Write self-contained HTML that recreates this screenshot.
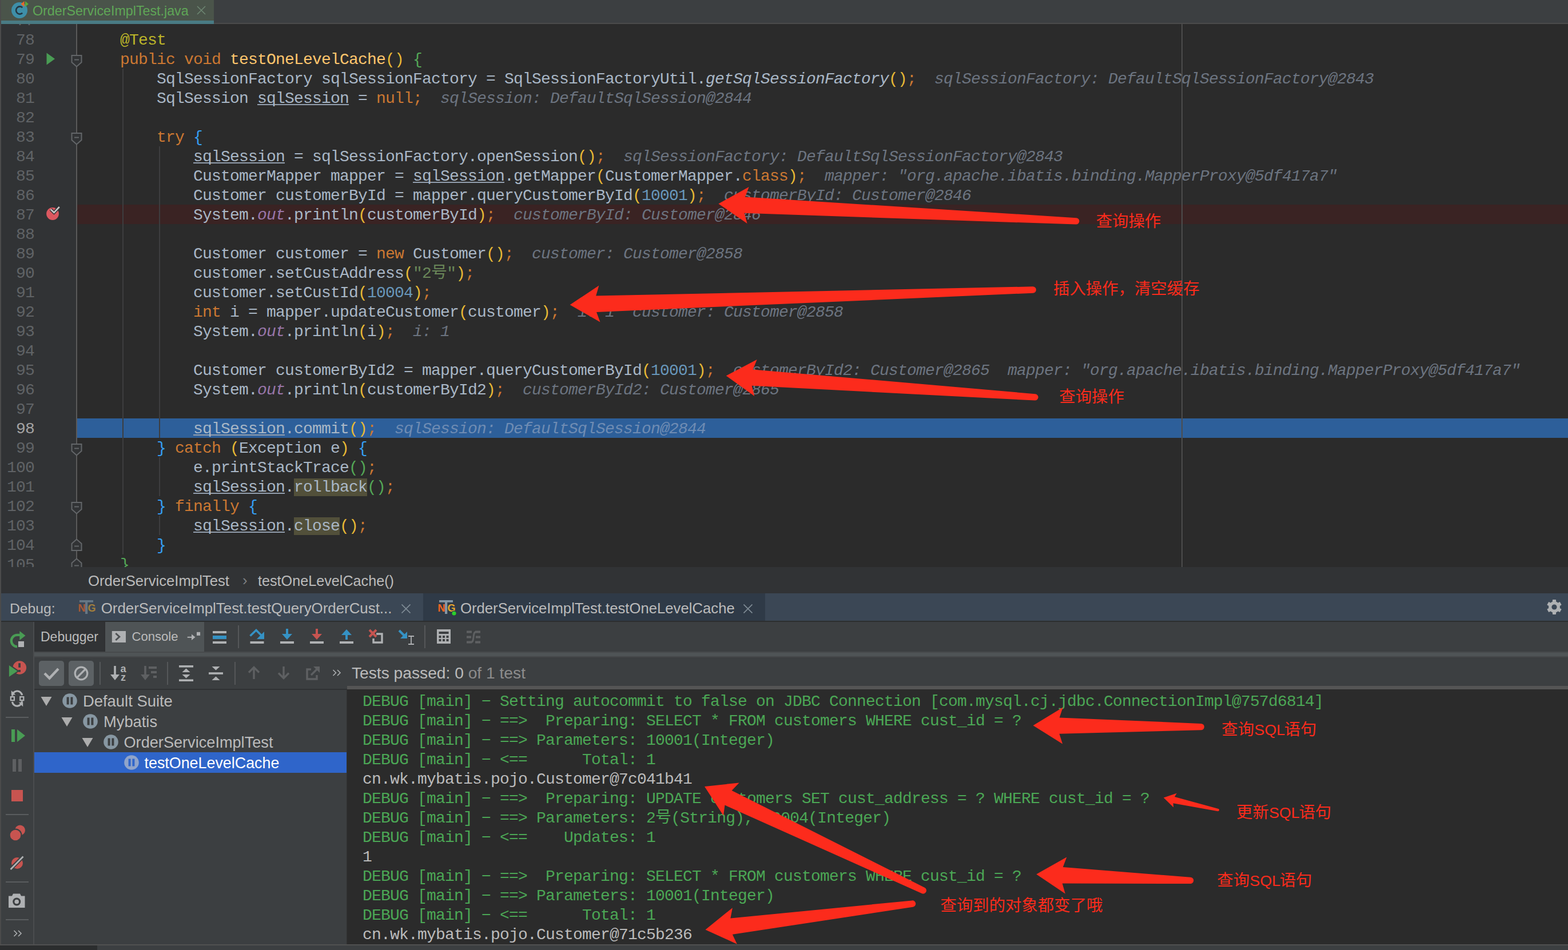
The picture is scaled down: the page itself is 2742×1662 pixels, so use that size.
<!DOCTYPE html><html><head><meta charset="utf-8"><title>IDE</title><style>
*{box-sizing:border-box}
html,body{margin:0;padding:0}
body{width:2742px;height:1662px;overflow:hidden;background:#2b2b2b;position:relative;font-family:"Liberation Sans",sans-serif;color:#bbbbbb}
.abs{position:absolute}
.mono{font-family:"Liberation Mono","Noto Sans CJK SC",monospace;font-size:28px;letter-spacing:-0.803px;white-space:pre;line-height:34px;height:34px;padding-top:1.5px}
.ln{position:absolute;left:0;width:60px;text-align:right;color:#606366}
.cl{position:absolute;left:146px;color:#a9b7c6}
.k{color:#cc7832}.a{color:#bbb529}.m{color:#ffc66d}.n{color:#6897bb}.s{color:#6a8759}
.f{color:#9876aa;font-style:italic}.i{font-style:italic}.h{color:#6c7480;font-style:italic}
.u{text-decoration:underline;text-decoration-color:#939fae;text-decoration-thickness:1.5px;text-underline-offset:2px;text-decoration-skip-ink:none}
.hb{color:#6f8cb3}.r1{color:#e8ba36}.r2{color:#54a857}.r3{color:#359ff4}
.hl{background:#52503a}
.g{color:#4ba755}.w{color:#bbbbbb}
.t{position:absolute;white-space:pre;line-height:1}
svg{display:block}
</style></head><body>
<div class="abs" style="left:0px;top:0px;width:2742px;height:42px;background:#3c3f41;"></div>
<div class="abs" style="left:0px;top:40px;width:2742px;height:2px;background:#4b4b4b;"></div>
<div class="abs" style="left:2px;top:0px;width:372px;height:42px;background:#4a544a;"></div>
<div class="abs" style="left:2px;top:36px;width:372px;height:6px;background:#497b84;"></div>
<svg class="abs" style="left:18px;top:0px" width="36" height="36" viewBox="0 0 36 36">
<circle cx="16" cy="18" r="14" fill="#3e8fa8"/>
<path d="M21.2 13.2A6.6 6.6 0 1 0 21.2 22.8" fill="none" stroke="#253641" stroke-width="2.6"/>
<path d="M18.5 7L24.5 2V12Z" fill="#e9672b"/><path d="M26 2L32 7L26 12Z" fill="#59a83b"/>
</svg>
<div class="t" style="left:57px;top:7.87px;font-size:23.26px;height:23.26px;line-height:23.26px;color:#5fa657;">OrderServiceImplTest.java</div>
<svg class="abs" style="left:344px;top:10px" width="16" height="16" viewBox="0 0 16 16"><path d="M1 1L15 15M15 1L1 15" stroke="#6d8672" stroke-width="1.6" fill="none"/></svg>
<div class="abs" style="left:2px;top:42px;width:131px;height:950px;background:#313335;"></div>
<div class="abs" style="left:133px;top:42px;width:2px;height:950px;background:#5a5a5a;"></div>
<div class="abs" style="left:135px;top:358px;width:2607px;height:34px;background:#3a2323;"></div>
<div class="abs" style="left:135px;top:732px;width:2607px;height:34px;background:#2d5f9a;"></div>
<div class="abs" style="left:214px;top:120px;width:2px;height:850px;background:#3d3d3f;"></div>
<div class="abs" style="left:278px;top:256px;width:2px;height:510px;background:#3d3d3f;"></div>
<div class="abs" style="left:278px;top:800px;width:2px;height:68px;background:#3d3d3f;"></div>
<div class="abs" style="left:278px;top:902px;width:2px;height:34px;background:#3d3d3f;"></div>
<div class="abs" style="left:2066px;top:42px;width:2px;height:950px;background:#4d4d4d;"></div>
<div class="abs" style="left:0;top:42px;width:2742px;height:950px;overflow:hidden"><div class="abs" style="left:0;top:-42px;width:2742px;height:1100px">
<div class="ln mono" style="top:18px;color:#606366">77</div>
<div class="ln mono" style="top:52px;color:#606366">78</div>
<div class="ln mono" style="top:86px;color:#606366">79</div>
<div class="ln mono" style="top:120px;color:#606366">80</div>
<div class="ln mono" style="top:154px;color:#606366">81</div>
<div class="ln mono" style="top:188px;color:#606366">82</div>
<div class="ln mono" style="top:222px;color:#606366">83</div>
<div class="ln mono" style="top:256px;color:#606366">84</div>
<div class="ln mono" style="top:290px;color:#606366">85</div>
<div class="ln mono" style="top:324px;color:#606366">86</div>
<div class="ln mono" style="top:358px;color:#606366">87</div>
<div class="ln mono" style="top:392px;color:#606366">88</div>
<div class="ln mono" style="top:426px;color:#606366">89</div>
<div class="ln mono" style="top:460px;color:#606366">90</div>
<div class="ln mono" style="top:494px;color:#606366">91</div>
<div class="ln mono" style="top:528px;color:#606366">92</div>
<div class="ln mono" style="top:562px;color:#606366">93</div>
<div class="ln mono" style="top:596px;color:#606366">94</div>
<div class="ln mono" style="top:630px;color:#606366">95</div>
<div class="ln mono" style="top:664px;color:#606366">96</div>
<div class="ln mono" style="top:698px;color:#606366">97</div>
<div class="ln mono" style="top:732px;color:#a4a3a3">98</div>
<div class="ln mono" style="top:766px;color:#606366">99</div>
<div class="ln mono" style="top:800px;color:#606366">100</div>
<div class="ln mono" style="top:834px;color:#606366">101</div>
<div class="ln mono" style="top:868px;color:#606366">102</div>
<div class="ln mono" style="top:902px;color:#606366">103</div>
<div class="ln mono" style="top:936px;color:#606366">104</div>
<div class="ln mono" style="top:970px;color:#606366">105</div>
<div class="cl mono" style="top:52px">    <span class="a">@Test</span></div>
<div class="cl mono" style="top:86px">    <span class="k">public void </span><span class="m">testOneLevelCache</span><span class="r1">()</span> <span class="r2">{</span></div>
<div class="cl mono" style="top:120px">        SqlSessionFactory sqlSessionFactory = SqlSessionFactoryUtil.<span class="i">getSqlSessionFactory</span><span class="r1">()</span><span class="k">;</span><span class="h">  sqlSessionFactory: DefaultSqlSessionFactory@2843</span></div>
<div class="cl mono" style="top:154px">        SqlSession <span class="u">sqlSession</span> = <span class="k">null;</span><span class="h">  sqlSession: DefaultSqlSession@2844</span></div>
<div class="cl mono" style="top:222px">        <span class="k">try </span><span class="r3">{</span></div>
<div class="cl mono" style="top:256px">            <span class="u">sqlSession</span> = sqlSessionFactory.openSession<span class="r1">()</span><span class="k">;</span><span class="h">  sqlSessionFactory: DefaultSqlSessionFactory@2843</span></div>
<div class="cl mono" style="top:290px">            CustomerMapper mapper = <span class="u">sqlSession</span>.getMapper<span class="r1">(</span>CustomerMapper.<span class="k">class</span><span class="r1">)</span><span class="k">;</span><span class="h">  mapper: &quot;org.apache.ibatis.binding.MapperProxy@5df417a7&quot;</span></div>
<div class="cl mono" style="top:324px">            Customer customerById = mapper.queryCustomerById<span class="r1">(</span><span class="n">10001</span><span class="r1">)</span><span class="k">;</span><span class="h">  customerById: Customer@2846</span></div>
<div class="cl mono" style="top:358px">            System.<span class="f">out</span>.println<span class="r1">(</span>customerById<span class="r1">)</span><span class="k">;</span><span class="h">  customerById: Customer@2846</span></div>
<div class="cl mono" style="top:426px">            Customer customer = <span class="k">new </span>Customer<span class="r1">()</span><span class="k">;</span><span class="h">  customer: Customer@2858</span></div>
<div class="cl mono" style="top:460px">            customer.setCustAddress<span class="r1">(</span><span class="s">&quot;2</span><span class="s">号</span><span class="s">&quot;</span><span class="r1">)</span><span class="k">;</span></div>
<div class="cl mono" style="top:494px">            customer.setCustId<span class="r1">(</span><span class="n">10004</span><span class="r1">)</span><span class="k">;</span></div>
<div class="cl mono" style="top:528px">            <span class="k">int </span>i = mapper.updateCustomer<span class="r1">(</span>customer<span class="r1">)</span><span class="k">;</span><span class="h">  i: 1  customer: Customer@2858</span></div>
<div class="cl mono" style="top:562px">            System.<span class="f">out</span>.println<span class="r1">(</span>i<span class="r1">)</span><span class="k">;</span><span class="h">  i: 1</span></div>
<div class="cl mono" style="top:630px">            Customer customerById2 = mapper.queryCustomerById<span class="r1">(</span><span class="n">10001</span><span class="r1">)</span><span class="k">;</span><span class="h">  customerById2: Customer@2865  mapper: &quot;org.apache.ibatis.binding.MapperProxy@5df417a7&quot;</span></div>
<div class="cl mono" style="top:664px">            System.<span class="f">out</span>.println<span class="r1">(</span>customerById2<span class="r1">)</span><span class="k">;</span><span class="h">  customerById2: Customer@2865</span></div>
<div class="cl mono" style="top:732px">            <span class="u">sqlSession</span>.commit<span class="r1">()</span><span class="k">;</span><span class="h hb">  sqlSession: DefaultSqlSession@2844</span></div>
<div class="cl mono" style="top:766px">        <span class="r3">}</span> <span class="k">catch </span><span class="r1">(</span>Exception e<span class="r1">)</span> <span class="r3">{</span></div>
<div class="cl mono" style="top:800px">            e.printStackTrace<span class="r2">()</span><span class="k">;</span></div>
<div class="cl mono" style="top:834px">            <span class="u">sqlSession</span>.<span class="hl">rollback</span><span class="r2">()</span><span class="k">;</span></div>
<div class="cl mono" style="top:868px">        <span class="r3">}</span> <span class="k">finally </span><span class="r3">{</span></div>
<div class="cl mono" style="top:902px">            <span class="u">sqlSession</span>.<span class="hl">close</span><span class="r1">()</span><span class="k">;</span></div>
<div class="cl mono" style="top:936px">        <span class="r3">}</span></div>
<div class="cl mono" style="top:970px">    <span class="r2">}</span></div>
</div></div>
<svg class="abs" style="left:80px;top:92px" width="18" height="22" viewBox="0 0 18 22"><path d="M1.5 0.5L16 11L1.5 21.5Z" fill="#499c54"/></svg>
<svg class="abs" style="left:78px;top:356px" width="30" height="30" viewBox="0 0 30 30">
<circle cx="14" cy="18" r="10.900" fill="#db5860"/>
<path d="M10.700 10.200L16.400 15.800L25.800 6" fill="none" stroke="#313335" stroke-width="5.500"/>
<path d="M10.700 10.200L16.400 15.800L25.800 6" fill="none" stroke="#c8c8c8" stroke-width="2.600"/></svg>
<svg class="abs" style="left:124px;top:96px" width="20" height="22" viewBox="0 0 20 22"><path d="M1.5 1H18.5V13L10 20.5L1.5 13Z" fill="#313335" stroke="#636669" stroke-width="2"/><path d="M6 8.5H14" stroke="#636669" stroke-width="2"/></svg>
<svg class="abs" style="left:124px;top:232px" width="20" height="22" viewBox="0 0 20 22"><path d="M1.5 1H18.5V13L10 20.5L1.5 13Z" fill="#313335" stroke="#636669" stroke-width="2"/><path d="M6 8.5H14" stroke="#636669" stroke-width="2"/></svg>
<svg class="abs" style="left:124px;top:776px" width="20" height="22" viewBox="0 0 20 22"><path d="M1.5 1H18.5V13L10 20.5L1.5 13Z" fill="#313335" stroke="#636669" stroke-width="2"/><path d="M6 8.5H14" stroke="#636669" stroke-width="2"/></svg>
<svg class="abs" style="left:124px;top:878px" width="20" height="22" viewBox="0 0 20 22"><path d="M1.5 1H18.5V13L10 20.5L1.5 13Z" fill="#313335" stroke="#636669" stroke-width="2"/><path d="M6 8.5H14" stroke="#636669" stroke-width="2"/></svg>
<div class="abs" style="left:0;top:42px;width:2742px;height:950px;overflow:hidden"><div class="abs" style="left:0;top:-42px;width:2742px;height:1100px">
<svg class="abs" style="left:124px;top:941.5px" width="20" height="22" viewBox="0 0 20 22"><path d="M1.5 21H18.5V9L10 1.5L1.5 9Z" fill="#313335" stroke="#636669" stroke-width="2"/><path d="M6 13.5H14" stroke="#636669" stroke-width="2"/></svg>
<svg class="abs" style="left:124px;top:975.5px" width="20" height="22" viewBox="0 0 20 22"><path d="M1.5 21H18.5V9L10 1.5L1.5 9Z" fill="#313335" stroke="#636669" stroke-width="2"/><path d="M6 13.5H14" stroke="#636669" stroke-width="2"/></svg>
</div></div>
<div class="abs" style="left:0px;top:992px;width:2742px;height:46px;background:#313335;"></div>
<div class="t" style="left:154px;top:1004.15px;font-size:25.7px;height:25.7px;line-height:25.7px;color:#bbbbbb;">OrderServiceImplTest</div>
<div class="t" style="left:424px;top:1002.00px;font-size:26px;height:26px;line-height:26px;color:#7d8082;">›</div>
<div class="t" style="left:451px;top:1004.40px;font-size:25.2px;height:25.2px;line-height:25.2px;color:#bbbbbb;">testOneLevelCache()</div>
<div class="abs" style="left:0px;top:1038px;width:2742px;height:48px;background:#3b4755;"></div>
<div class="abs" style="left:740px;top:1038px;width:598px;height:48px;background:#2f3a47;"></div>
<div class="abs" style="left:0px;top:1086px;width:2742px;height:2px;background:#2c2e2f;"></div>
<div class="t" style="left:17px;top:1052.65px;font-size:24.7px;height:24.7px;line-height:24.7px;color:#bbbbbb;">Debug:</div>
<svg class="abs" style="left:136px;top:1047px" width="36" height="32" viewBox="0 0 36 32">
<g opacity="0.6"><path d="M3 3H27V6.8H17.200V27H13V6.8H3Z" fill="#8497a6"/>
<text x="0.500" y="23" font-family="Liberation Sans" font-weight="bold" font-size="18" fill="#f26522">N</text>
<text x="17.500" y="23" font-family="Liberation Sans" font-weight="bold" font-size="18" fill="#e6a52c">G</text></g></svg>
<div class="t" style="left:176.7px;top:1052.07px;font-size:25.87px;height:25.87px;line-height:25.87px;color:#bbbbbb;">OrderServiceImplTest.testQueryOrderCust...</div>
<svg class="abs" style="left:702px;top:1057px" width="16" height="16" viewBox="0 0 16 16"><path d="M0.5 0.5L15.5 15.5M15.5 0.5L0.5 15.5" stroke="#7f8b95" stroke-width="1.7" fill="none"/></svg>
<svg class="abs" style="left:765px;top:1047px" width="36" height="32" viewBox="0 0 36 32">
<g opacity="1"><path d="M3 3H27V6.8H17.200V27H13V6.8H3Z" fill="#8497a6"/>
<text x="0.500" y="23" font-family="Liberation Sans" font-weight="bold" font-size="18" fill="#f26522">N</text>
<text x="17.500" y="23" font-family="Liberation Sans" font-weight="bold" font-size="18" fill="#e6a52c">G</text></g><circle cx="29" cy="26" r="4.2" fill="#2bd02b" stroke="#2f3a47" stroke-width="1.2"/></svg>
<div class="t" style="left:805px;top:1052.15px;font-size:25.7px;height:25.7px;line-height:25.7px;color:#bbbbbb;">OrderServiceImplTest.testOneLevelCache</div>
<svg class="abs" style="left:1300px;top:1057px" width="16" height="16" viewBox="0 0 16 16"><path d="M0.5 0.5L15.5 15.5M15.5 0.5L0.5 15.5" stroke="#7f8b95" stroke-width="1.7" fill="none"/></svg>
<svg class="abs" style="left:2704px;top:1048px" width="28" height="28" viewBox="-14 -14 28 28">
<g fill="#afb1b3"><circle r="10"/><rect x="-3.100" y="-12.900" width="6.200" height="7" rx="0.800" transform="rotate(0)"/><rect x="-3.100" y="-12.900" width="6.200" height="7" rx="0.800" transform="rotate(60)"/><rect x="-3.100" y="-12.900" width="6.200" height="7" rx="0.800" transform="rotate(120)"/><rect x="-3.100" y="-12.900" width="6.200" height="7" rx="0.800" transform="rotate(180)"/><rect x="-3.100" y="-12.900" width="6.200" height="7" rx="0.800" transform="rotate(240)"/><rect x="-3.100" y="-12.900" width="6.200" height="7" rx="0.800" transform="rotate(300)"/></g><circle r="4.600" fill="#3b4755"/></svg>
<div class="abs" style="left:0px;top:1088px;width:2742px;height:52px;background:#3c3f41;"></div>
<div class="abs" style="left:60px;top:1088px;width:122px;height:52px;background:#313335;"></div>
<div class="abs" style="left:182px;top:1088px;width:2px;height:54px;background:#2f3133;"></div>
<div class="abs" style="left:184px;top:1088px;width:173px;height:60px;background:#4f5456;"></div>
<div class="abs" style="left:60px;top:1140px;width:2682px;height:2px;background:#474a4c;"></div>
<div class="abs" style="left:60px;top:1142px;width:2682px;height:6px;background:#4f5456;"></div>
<div class="abs" style="left:60px;top:1148px;width:2682px;height:2px;background:#45484a;"></div>
<div class="t" style="left:71px;top:1103.00px;font-size:23px;height:23px;line-height:23px;color:#bbbbbb;">Debugger</div>
<svg class="abs" style="left:195px;top:1103px" width="26" height="22" viewBox="0 0 26 22"><rect x="0.800" y="1" width="24.200" height="20" fill="#afb1b3"/><path d="M7.300 5L13.800 11L7.300 17" fill="none" stroke="#4e5254" stroke-width="3"/></svg>
<div class="t" style="left:230.5px;top:1103.45px;font-size:22.1px;height:22.1px;line-height:22.1px;color:#bbbbbb;">Console</div>
<svg class="abs" style="left:326px;top:1102px" width="26" height="22" viewBox="0 0 26 22"><path d="M1.700 12.800H10" fill="none" stroke="#afb1b3" stroke-width="2"/><path d="M9 7.500L15.500 12.800L9 18.100Z" fill="#afb1b3"/><rect x="18" y="3.800" width="6.100" height="6.100" fill="#afb1b3"/></svg>
<svg class="abs" style="left:372px;top:1102px" width="26" height="26" viewBox="0 0 26 26"><rect x="0" y="2" width="24" height="4" fill="#afb1b3"/><rect x="0" y="10" width="24" height="6" fill="#3592c4"/><rect x="0" y="20" width="24" height="4" fill="#afb1b3"/></svg>
<div class="abs" style="left:416px;top:1094px;width:2px;height:40px;background:#555759;"></div>
<svg class="abs" style="left:436px;top:1100px" width="28" height="28" viewBox="0 0 28 28"><rect x="1.5" y="22" width="24" height="4" fill="#afb1b3"/><path d="M1.5 12.5L12 2.5L21 11.5" fill="none" stroke="#3592c4" stroke-width="3.6"/><path d="M26 5V18H13Z" fill="#3592c4"/></svg>
<svg class="abs" style="left:488px;top:1098px" width="28" height="30" viewBox="0 0 28 30"><rect x="2" y="24" width="24" height="4" fill="#afb1b3"/><path d="M14 2V13" stroke="#3592c4" stroke-width="4" fill="none"/><path d="M5 11H23L14 21Z" fill="#3592c4"/></svg>
<svg class="abs" style="left:540px;top:1098px" width="28" height="30" viewBox="0 0 28 30"><rect x="2" y="24" width="24" height="4" fill="#afb1b3"/><path d="M14 2V13" stroke="#c75450" stroke-width="4" fill="none"/><path d="M5 11H23L14 21Z" fill="#c75450"/></svg>
<svg class="abs" style="left:592px;top:1098px" width="28" height="30" viewBox="0 0 28 30"><rect x="2" y="24" width="24" height="4" fill="#afb1b3"/><path d="M14 21V11" stroke="#3592c4" stroke-width="4" fill="none"/><path d="M5 13H23L14 3Z" fill="#3592c4"/></svg>
<svg class="abs" style="left:644px;top:1100px" width="28" height="28" viewBox="0 0 28 28"><path d="M2 2L14 14M14 2L2 14" stroke="#c75450" stroke-width="4" fill="none"/><path d="M14 9H24V24H9V17" fill="none" stroke="#afb1b3" stroke-width="3.4"/></svg>
<svg class="abs" style="left:696px;top:1100px" width="30" height="30" viewBox="0 0 30 30"><path d="M2 3L13 14" stroke="#3592c4" stroke-width="4" fill="none"/><path d="M16 5V17H4Z" fill="#3592c4"/><path d="M18 13H28M18 27H28M23 13V27" stroke="#afb1b3" stroke-width="1.8" fill="none"/></svg>
<div class="abs" style="left:742px;top:1094px;width:2px;height:40px;background:#555759;"></div>
<svg class="abs" style="left:764px;top:1101px" width="26" height="26" viewBox="0 0 26 26"><rect x="0" y="0" width="24" height="25" fill="#afb1b3"/><rect x="3.5" y="4" width="17" height="4" fill="#3c3f41"/><rect x="3.5" y="11" width="4" height="4" fill="#3c3f41"/><rect x="3.5" y="17" width="4" height="4" fill="#3c3f41"/><rect x="10.0" y="11" width="4" height="4" fill="#3c3f41"/><rect x="10.0" y="17" width="4" height="4" fill="#3c3f41"/><rect x="16.5" y="11" width="4" height="4" fill="#3c3f41"/><rect x="16.5" y="17" width="4" height="4" fill="#3c3f41"/></svg>
<svg class="abs" style="left:816px;top:1103px" width="26" height="24" viewBox="0 0 26 24"><g fill="none" stroke="#5e6062" stroke-width="4"><path d="M0 2.5H9M15 2.5H24M0 11.500H8M16 11.500H24M0 20.500H9M15 20.500H24"/><path d="M8 20.500C14 20.500 10 2.500 16 2.500" stroke-width="3"/></g></svg>
<div class="abs" style="left:0px;top:1088px;width:60px;height:564px;background:#3c3f41;"></div>
<div class="abs" style="left:58px;top:1088px;width:2px;height:564px;background:#4a4c4e;"></div>
<svg class="abs" style="left:16px;top:1102px" width="32" height="32" viewBox="0 0 32 32"><path d="M14 29.300A10.200 10.200 0 0 1 14 8.900H19" fill="none" stroke="#499c54" stroke-width="4.300"/><path d="M18.300 1.900L28.500 10L18.300 18Z" fill="#499c54"/><rect x="15.900" y="19.900" width="10.100" height="10.100" fill="#afb1b3"/></svg>
<svg class="abs" style="left:14px;top:1154px" width="34" height="32" viewBox="0 0 34 32"><circle cx="20.300" cy="14" r="11.800" fill="#c75450"/><path d="M1.900 10L16.500 20.100L1.900 30.100Z" fill="#499c54" stroke="#3c3f41" stroke-width="4" stroke-linejoin="miter"/><path d="M1.900 10L16.500 20.100L1.900 30.100Z" fill="#499c54"/><rect x="18.200" y="6.200" width="3.800" height="7.600" fill="#3c3f41"/><rect x="18.200" y="18" width="3.800" height="3.700" fill="#3c3f41"/></svg>
<svg class="abs" style="left:15px;top:1205px" width="32" height="34" viewBox="0 0 32 34"><g fill="none" stroke="#afb1b3" stroke-width="3.200"><path d="M6.500 12.500A8.600 8.600 0 0 1 23.600 11.300"/><path d="M23.500 21.600A8.600 8.600 0 0 1 6.400 22.800"/></g><path d="M4.800 2.900V10.400H12.300Z" fill="#afb1b3"/><path d="M25.200 31.200V23.700H17.700Z" fill="#afb1b3"/><rect x="3.800" y="14.100" width="6.100" height="6.100" fill="none" stroke="#afb1b3" stroke-width="2.200"/><rect x="20.200" y="14.100" width="6.100" height="6.100" fill="none" stroke="#afb1b3" stroke-width="2.200"/></svg>
<div class="abs" style="left:10px;top:1254px;width:40px;height:2px;background:#5a5d5f;"></div>
<svg class="abs" style="left:20px;top:1275px" width="26" height="24" viewBox="0 0 26 24"><rect x="0" y="1" width="6" height="22" fill="#499c54"/><path d="M10 1L24 12L10 23Z" fill="#499c54"/></svg>
<svg class="abs" style="left:22px;top:1328px" width="18" height="22" viewBox="0 0 18 22"><rect x="0" y="0" width="6" height="22" fill="#5e6062"/><rect x="10" y="0" width="6" height="22" fill="#5e6062"/></svg>
<div class="abs" style="left:20px;top:1382px;width:20px;height:20px;background:#c75450;"></div>
<div class="abs" style="left:10px;top:1424px;width:40px;height:2px;background:#5a5d5f;"></div>
<svg class="abs" style="left:17px;top:1443px" width="30" height="28" viewBox="0 0 30 28"><circle cx="18" cy="9.5" r="9" fill="#c75450"/><circle cx="10" cy="18" r="11.5" fill="#3c3f41"/><circle cx="10" cy="18" r="9.3" fill="#c75450"/></svg>
<svg class="abs" style="left:16px;top:1497px" width="28" height="26" viewBox="0 0 28 26"><circle cx="14" cy="13" r="10" fill="#c75450"/><path d="M2 24L25 1" stroke="#3c3f41" stroke-width="6.5"/><path d="M2.5 24L24.5 1.5" stroke="#afb1b3" stroke-width="2.8"/></svg>
<div class="abs" style="left:10px;top:1542px;width:40px;height:2px;background:#5a5d5f;"></div>
<svg class="abs" style="left:15px;top:1563px" width="30" height="26" viewBox="0 0 30 26"><path d="M0 4.500H6L8 0.500H20L22 4.500H28.500V25H0Z" fill="#afb1b3"/><circle cx="14.2" cy="14.500" r="7" fill="#3c3f41"/><circle cx="14.2" cy="14.500" r="3.800" fill="#afb1b3"/></svg>
<div class="abs" style="left:10px;top:1608px;width:40px;height:2px;background:#5a5d5f;"></div>
<svg class="abs" style="left:23px;top:1627px" width="16" height="12" viewBox="0 0 16 12"><path d="M1.500 1L6.500 6L1.500 11M9 1L14 6L9 11" fill="none" stroke="#afb1b3" stroke-width="1.6"/></svg>
<div class="abs" style="left:60px;top:1150px;width:2682px;height:50px;background:#3c3f41;"></div>
<div class="abs" style="left:68px;top:1156px;width:44px;height:44px;background:#5c6164;border-radius:5px"></div>
<div class="abs" style="left:120px;top:1156px;width:44px;height:44px;background:#5c6164;border-radius:5px"></div>
<svg class="abs" style="left:76px;top:1165px" width="28" height="26" viewBox="0 0 28 26"><path d="M2 13L10.500 21.5L26 5" fill="none" stroke="#afb1b3" stroke-width="4.4"/></svg>
<svg class="abs" style="left:129px;top:1165px" width="28" height="28" viewBox="0 0 28 28"><circle cx="13" cy="13" r="10.8" fill="none" stroke="#afb1b3" stroke-width="3.2"/><path d="M5.5 20.5L20.5 5.500" stroke="#afb1b3" stroke-width="3.2"/></svg>
<div class="abs" style="left:174px;top:1158px;width:2px;height:40px;background:#555759;"></div>
<svg class="abs" style="left:193px;top:1164px" width="30" height="28" viewBox="0 0 30 28"><path d="M8 1V20" stroke="#afb1b3" stroke-width="3.600"/><path d="M0 16H16L8 26Z" fill="#afb1b3"/><text x="17.5" y="12" font-family="Liberation Sans" font-weight="bold" font-size="18" fill="#afb1b3">a</text><text x="18" y="27" font-family="Liberation Sans" font-weight="bold" font-size="18" fill="#afb1b3">z</text></svg>
<svg class="abs" style="left:246px;top:1164px" width="30" height="28" viewBox="0 0 30 28"><path d="M8 1V20" stroke="#5e6062" stroke-width="3.600"/><path d="M0 16H16L8 26Z" fill="#5e6062"/><rect x="14" y="2" width="14" height="4" fill="#5e6062"/><rect x="18" y="10" width="10" height="4" fill="#5e6062"/><rect x="22" y="18" width="6" height="4" fill="#5e6062"/></svg>
<div class="abs" style="left:292px;top:1158px;width:2px;height:40px;background:#555759;"></div>
<svg class="abs" style="left:313px;top:1163px" width="26" height="30" viewBox="0 0 26 30"><rect x="0" y="1" width="25" height="3.600" fill="#afb1b3"/><rect x="0" y="25.400" width="25" height="3.600" fill="#afb1b3"/><path d="M5.500 13L12.500 6.500L19.500 13Z" fill="#afb1b3"/><path d="M5.500 17L12.500 23.500L19.500 17Z" fill="#afb1b3"/></svg>
<svg class="abs" style="left:365px;top:1163px" width="26" height="30" viewBox="0 0 26 30"><rect x="0" y="13.200" width="25" height="3.600" fill="#afb1b3"/><path d="M5.500 3L12.500 9.500L19.500 3Z" fill="#afb1b3"/><path d="M5.500 27L12.500 20.500L19.500 27Z" fill="#afb1b3"/></svg>
<div class="abs" style="left:410px;top:1158px;width:2px;height:40px;background:#555759;"></div>
<svg class="abs" style="left:432px;top:1164px" width="24" height="26" viewBox="0 0 24 26"><path d="M12 24V4M3 12.500L12 3.500L21 12.500" fill="none" stroke="#5e6062" stroke-width="3.400"/></svg>
<svg class="abs" style="left:484px;top:1164px" width="24" height="26" viewBox="0 0 24 26"><path d="M12 2V22M3 13.500L12 22.500L21 13.500" fill="none" stroke="#5e6062" stroke-width="3.400"/></svg>
<svg class="abs" style="left:535px;top:1164px" width="26" height="26" viewBox="0 0 26 26"><path d="M9 7H2V24H19V17" fill="none" stroke="#5e6062" stroke-width="3.400"/><path d="M9 17L22 4" stroke="#5e6062" stroke-width="3.400"/><path d="M13 2H24V13Z" fill="#5e6062"/></svg>
<svg class="abs" style="left:581px;top:1171px" width="16" height="12" viewBox="0 0 16 12"><path d="M1.500 1L6.500 6L1.500 11M9 1L14 6L9 11" fill="none" stroke="#afb1b3" stroke-width="1.600"/></svg>
<div class="t" style="left:615px;top:1163.300px;font-size:28.190px;height:28.190px;line-height:28.190px;color:#bbbbbb">Tests passed: 0<span style="color:#8c8c8c"> of 1 test</span></div>
<div class="abs" style="left:60px;top:1200px;width:547px;height:452px;background:#3c3f41;"></div>
<div class="abs" style="left:60px;top:1205px;width:547px;height:2px;background:#2f3133;"></div>
<div class="abs" style="left:607px;top:1200px;width:2135px;height:6px;background:#555555;"></div>
<div class="abs" style="left:60px;top:1316px;width:546px;height:36px;background:#2f65ca;"></div>
<svg class="abs" style="left:71px;top:1218px" width="20" height="18" viewBox="0 0 20 18"><path d="M0.500 1H19.500L10 17Z" fill="#adadad"/></svg>
<svg class="abs" style="left:109px;top:1213px" width="26" height="26" viewBox="0 0 26 26"><circle cx="13" cy="13" r="12.800" fill="#8797a2"/><rect x="7.600" y="6.500" width="4" height="13" fill="#3c3f41"/><rect x="14.400" y="6.500" width="4" height="13" fill="#3c3f41"/></svg>
<div class="t" style="left:145px;top:1213.30px;font-size:27.4px;height:27.4px;line-height:27.4px;color:#bbbbbb;">Default Suite</div>
<svg class="abs" style="left:107px;top:1254px" width="20" height="18" viewBox="0 0 20 18"><path d="M0.500 1H19.500L10 17Z" fill="#adadad"/></svg>
<svg class="abs" style="left:145px;top:1249px" width="26" height="26" viewBox="0 0 26 26"><circle cx="13" cy="13" r="12.800" fill="#8797a2"/><rect x="7.600" y="6.500" width="4" height="13" fill="#3c3f41"/><rect x="14.400" y="6.500" width="4" height="13" fill="#3c3f41"/></svg>
<div class="t" style="left:181px;top:1249.35px;font-size:27.3px;height:27.3px;line-height:27.3px;color:#bbbbbb;">Mybatis</div>
<svg class="abs" style="left:143px;top:1290px" width="20" height="18" viewBox="0 0 20 18"><path d="M0.500 1H19.500L10 17Z" fill="#adadad"/></svg>
<svg class="abs" style="left:181px;top:1285px" width="26" height="26" viewBox="0 0 26 26"><circle cx="13" cy="13" r="12.800" fill="#8797a2"/><rect x="7.600" y="6.500" width="4" height="13" fill="#3c3f41"/><rect x="14.400" y="6.500" width="4" height="13" fill="#3c3f41"/></svg>
<div class="t" style="left:216.5px;top:1285.42px;font-size:27.15px;height:27.15px;line-height:27.15px;color:#bbbbbb;">OrderServiceImplTest</div>
<svg class="abs" style="left:217px;top:1321px" width="26" height="26" viewBox="0 0 26 26"><circle cx="13" cy="13" r="12.800" fill="#90a4ca"/><rect x="7.600" y="6.500" width="4" height="13" fill="#2f65ca"/><rect x="14.400" y="6.500" width="4" height="13" fill="#2f65ca"/></svg>
<div class="t" style="left:252.5px;top:1321.57px;font-size:26.87px;height:26.87px;line-height:26.87px;color:#ffffff;">testOneLevelCache</div>
<div class="abs" style="left:606px;top:1206px;width:1px;height:446px;background:#323232;"></div>
<div class="abs" style="left:607px;top:1206px;width:2135px;height:446px;background:#2b2b2b;"></div>
<div class="abs mono g" style="left:634px;top:1209px">DEBUG [main] − Setting autocommit to false on JDBC Connection [com.mysql.cj.jdbc.ConnectionImpl@757d6814]</div>
<div class="abs mono g" style="left:634px;top:1243px">DEBUG [main] − ==&gt;  Preparing: SELECT * FROM customers WHERE cust_id = ? </div>
<div class="abs mono g" style="left:634px;top:1277px">DEBUG [main] − ==&gt; Parameters: 10001(Integer)</div>
<div class="abs mono g" style="left:634px;top:1311px">DEBUG [main] − &lt;==      Total: 1</div>
<div class="abs mono w" style="left:634px;top:1345px">cn.wk.mybatis.pojo.Customer@7c041b41</div>
<div class="abs mono g" style="left:634px;top:1379px">DEBUG [main] − ==&gt;  Preparing: UPDATE customers SET cust_address = ? WHERE cust_id = ? </div>
<div class="abs mono g" style="left:634px;top:1413px">DEBUG [main] − ==&gt; Parameters: 2号(String), 10004(Integer)</div>
<div class="abs mono g" style="left:634px;top:1447px">DEBUG [main] − &lt;==    Updates: 1</div>
<div class="abs mono w" style="left:634px;top:1481px">1</div>
<div class="abs mono g" style="left:634px;top:1515px">DEBUG [main] − ==&gt;  Preparing: SELECT * FROM customers WHERE cust_id = ? </div>
<div class="abs mono g" style="left:634px;top:1549px">DEBUG [main] − ==&gt; Parameters: 10001(Integer)</div>
<div class="abs mono g" style="left:634px;top:1583px">DEBUG [main] − &lt;==      Total: 1</div>
<div class="abs mono w" style="left:634px;top:1617px">cn.wk.mybatis.pojo.Customer@71c5b236</div>
<div class="abs" style="left:0px;top:0px;width:2px;height:1652px;background:#4b4b4b;"></div>
<svg class="abs" style="left:0;top:0" width="2742" height="1662" viewBox="0 0 2742 1662"><g fill="#fc2b1c"><path d="M1256.4 356.4 L1309.7 327.0 L1303.0 344.5 L1882.0 381.2 A5.7 5.7 0 0 1 1881.4 392.6 L1301.7 372.8 L1306.6 390.9Z"/><path d="M996.7 533.2 L1047.4 499.6 L1042.2 517.6 L1806.0 501.3 A5.7 5.7 0 0 1 1806.4 512.7 L1043.1 546.0 L1049.5 563.6Z"/><path d="M1269.8 657.4 L1323.7 629.1 L1316.7 646.4 L1810.3 689.2 A5.7 5.7 0 0 1 1809.5 700.6 L1314.7 674.8 L1319.3 692.9Z"/><path d="M1806.6 1269.2 L1858.7 1237.6 L1852.7 1255.4 L2100.2 1265.9 A5.7 5.7 0 0 1 2100.2 1277.3 L1852.5 1283.8 L1858.1 1301.6Z"/><path d="M2034.8 1395.6 L2057.8 1387.7 L2054.0 1394.1 L2130.7 1414.9 A2.3 2.3 0 0 1 2129.7 1419.3 L2051.5 1405.2 L2052.2 1412.6Z"/><path d="M1232.1 1376.0 L1292.6 1369.4 L1279.7 1382.9 L1616.8 1552.7 A5.7 5.7 0 0 1 1611.9 1563.0 L1267.5 1408.6 L1265.1 1427.1Z"/><path d="M1233.5 1626.4 L1280.9 1588.2 L1277.4 1606.6 L1594.9 1575.4 A5.7 5.7 0 0 1 1596.4 1586.7 L1280.9 1634.8 L1288.9 1651.7Z"/><path d="M1812.3 1529.4 L1865.4 1499.5 L1858.8 1517.1 L2081.8 1534.7 A5.7 5.7 0 0 1 2081.4 1546.1 L1857.7 1545.5 L1862.8 1563.5Z"/>
<text x="1916.7" y="396.5" font-family="'Liberation Sans','Noto Sans CJK SC',sans-serif" font-size="28.4">查询操作</text>
<text x="1842.0" y="514.5" font-family="'Liberation Sans','Noto Sans CJK SC',sans-serif" font-size="28.4">插入操作，清空缓存</text>
<text x="1852.3" y="703.5" font-family="'Liberation Sans','Noto Sans CJK SC',sans-serif" font-size="28.4">查询操作</text>
<text x="2136.3" y="1285.7" font-family="'Liberation Sans','Noto Sans CJK SC',sans-serif" font-size="28.4">查询</text><text x="2193.6" y="1285.7" font-family="Liberation Sans" font-size="26.7">SQL</text><text x="2245.7" y="1285.7" font-family="'Liberation Sans','Noto Sans CJK SC',sans-serif" font-size="28.4">语句</text>
<text x="2162.0" y="1430.5" font-family="'Liberation Sans','Noto Sans CJK SC',sans-serif" font-size="28.4">更新</text><text x="2219.3" y="1430.5" font-family="Liberation Sans" font-size="26.7">SQL</text><text x="2271.4" y="1430.5" font-family="'Liberation Sans','Noto Sans CJK SC',sans-serif" font-size="28.4">语句</text>
<text x="2128.3" y="1549.7" font-family="'Liberation Sans','Noto Sans CJK SC',sans-serif" font-size="28.4">查询</text><text x="2185.6" y="1549.7" font-family="Liberation Sans" font-size="26.7">SQL</text><text x="2237.7" y="1549.7" font-family="'Liberation Sans','Noto Sans CJK SC',sans-serif" font-size="28.4">语句</text>
<text x="1644.5" y="1594.0" font-family="'Liberation Sans','Noto Sans CJK SC',sans-serif" font-size="28.4">查询到的对象都变了哦</text>
</g></svg>
<div class="abs" style="left:0px;top:1652px;width:2742px;height:10px;background:#3c3f41;"></div>
<div class="abs" style="left:0px;top:1652px;width:2742px;height:2px;background:#515151;"></div>
<div class="abs" style="left:0px;top:1654px;width:170px;height:8px;background:#2b2d2e;"></div>
</body></html>
